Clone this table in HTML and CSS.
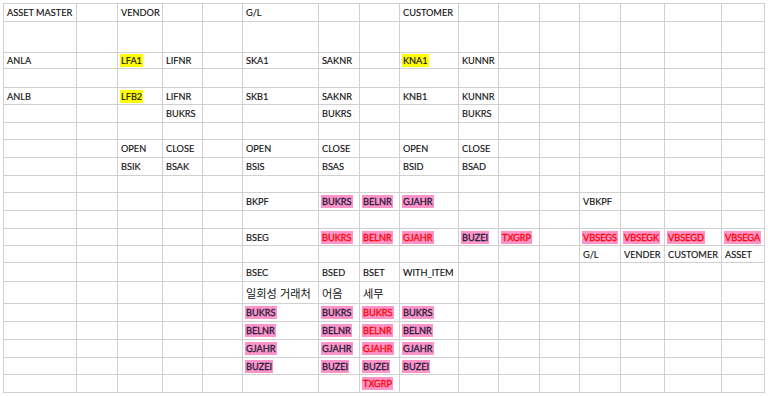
FILE: index.html
```html
<!DOCTYPE html>
<html lang="ko">
<head>
    <meta charset="utf-8">
    <title>SAP Tables</title>
    <link rel="stylesheet" href="styles.css">
</head>
<body>
    <div class="sheet">
        <div class="row h18"><div>ASSET MASTER</div><div></div><div>VENDOR</div><div></div><div></div><div>G/L</div><div></div><div></div><div>CUSTOMER</div><div></div><div></div><div></div><div></div><div></div><div></div><div></div></div>
        <div class="row h31"><div></div><div></div><div></div><div></div><div></div><div></div><div></div><div></div><div></div><div></div><div></div><div></div><div></div><div></div><div></div><div></div></div>
        <div class="row h16"><div>ANLA</div><div></div><div><span class="yl">LFA1</span></div><div>LIFNR</div><div></div><div>SKA1</div><div>SAKNR</div><div></div><div><span class="yl">KNA1</span></div><div>KUNNR</div><div></div><div></div><div></div><div></div><div></div><div></div></div>
        <div class="row h19"><div></div><div></div><div></div><div></div><div></div><div></div><div></div><div></div><div></div><div></div><div></div><div></div><div></div><div></div><div></div><div></div></div>
        <div class="row h17"><div>ANLB</div><div></div><div><span class="yl">LFB2</span></div><div>LIFNR</div><div></div><div>SKB1</div><div>SAKNR</div><div></div><div>KNB1</div><div>KUNNR</div><div></div><div></div><div></div><div></div><div></div><div></div></div>
        <div class="row h18"><div></div><div></div><div></div><div>BUKRS</div><div></div><div></div><div>BUKRS</div><div></div><div></div><div>BUKRS</div><div></div><div></div><div></div><div></div><div></div><div></div></div>
        <div class="row h17"><div></div><div></div><div></div><div></div><div></div><div></div><div></div><div></div><div></div><div></div><div></div><div></div><div></div><div></div><div></div><div></div></div>
        <div class="row h18"><div></div><div></div><div>OPEN</div><div>CLOSE</div><div></div><div>OPEN</div><div>CLOSE</div><div></div><div>OPEN</div><div>CLOSE</div><div></div><div></div><div></div><div></div><div></div><div></div></div>
        <div class="row h18"><div></div><div></div><div>BSIK</div><div>BSAK</div><div></div><div>BSIS</div><div>BSAS</div><div></div><div>BSID</div><div>BSAD</div><div></div><div></div><div></div><div></div><div></div><div></div></div>
        <div class="row h17"><div></div><div></div><div></div><div></div><div></div><div></div><div></div><div></div><div></div><div></div><div></div><div></div><div></div><div></div><div></div><div></div></div>
        <div class="row h18"><div></div><div></div><div></div><div></div><div></div><div>BKPF</div><div><span class="pk">BUKRS</span></div><div><span class="pk">BELNR</span></div><div><span class="pk">GJAHR</span></div><div></div><div></div><div></div><div>VBKPF</div><div></div><div></div><div></div></div>
        <div class="row h18"><div></div><div></div><div></div><div></div><div></div><div></div><div></div><div></div><div></div><div></div><div></div><div></div><div></div><div></div><div></div><div></div></div>
        <div class="row h17"><div></div><div></div><div></div><div></div><div></div><div>BSEG</div><div><span class="pk red">BUKRS</span></div><div><span class="pk red">BELNR</span></div><div><span class="pk red">GJAHR</span></div><div><span class="pk">BUZEI</span></div><div><span class="pk red">TXGRP</span></div><div></div><div><span class="pk red">VBSEGS</span></div><div><span class="pk red">VBSEGK</span></div><div><span class="pk red">VBSEGD</span></div><div><span class="pk red">VBSEGA</span></div></div>
        <div class="row h17"><div></div><div></div><div></div><div></div><div></div><div></div><div></div><div></div><div></div><div></div><div></div><div></div><div>G/L</div><div>VENDER</div><div>CUSTOMER</div><div>ASSET</div></div>
        <div class="row h19"><div></div><div></div><div></div><div></div><div></div><div>BSEC</div><div>BSED</div><div>BSET</div><div>WITH_ITEM</div><div></div><div></div><div></div><div></div><div></div><div></div><div></div></div>
        <div class="row h22 kr"><div></div><div></div><div></div><div></div><div></div><div>일회성 거래처</div><div>어음</div><div>세무</div><div></div><div></div><div></div><div></div><div></div><div></div><div></div><div></div></div>
        <div class="row h18"><div></div><div></div><div></div><div></div><div></div><div><span class="pk">BUKRS</span></div><div><span class="pk">BUKRS</span></div><div><span class="pk red">BUKRS</span></div><div><span class="pk">BUKRS</span></div><div></div><div></div><div></div><div></div><div></div><div></div><div></div></div>
        <div class="row h18"><div></div><div></div><div></div><div></div><div></div><div><span class="pk">BELNR</span></div><div><span class="pk">BELNR</span></div><div><span class="pk red">BELNR</span></div><div><span class="pk">BELNR</span></div><div></div><div></div><div></div><div></div><div></div><div></div><div></div></div>
        <div class="row h18"><div></div><div></div><div></div><div></div><div></div><div><span class="pk">GJAHR</span></div><div><span class="pk">GJAHR</span></div><div><span class="pk red">GJAHR</span></div><div><span class="pk">GJAHR</span></div><div></div><div></div><div></div><div></div><div></div><div></div><div></div></div>
        <div class="row h17"><div></div><div></div><div></div><div></div><div></div><div><span class="pk">BUZEI</span></div><div><span class="pk">BUZEI</span></div><div><span class="pk">BUZEI</span></div><div><span class="pk">BUZEI</span></div><div></div><div></div><div></div><div></div><div></div><div></div><div></div></div>
        <div class="row h18"><div></div><div></div><div></div><div></div><div></div><div></div><div></div><div><span class="pk red">TXGRP</span></div><div></div><div></div><div></div><div></div><div></div><div></div><div></div><div></div></div>
    </div>
</body>
</html>
```

FILE: styles.css
```css
body {
    margin: 0;
    background: #fff;
    font-family: Lato, "Liberation Sans", sans-serif;
    font-size: 9.2px;
    color: #111;
    -webkit-text-stroke: 0.15px;
}
.sheet {
    margin: 3px 0 0 3px;
    width: 761px;
    border-top: 1px solid #d0d0d0;
    border-left: 1px solid #d0d0d0;
}
.row {
    display: grid;
    grid-template-columns: 73px 41px 45px 40px 40px 76px 41px 40px 59px 40px 41px 40px 41px 44px 57px 43px;
}
.row > div {
    border-right: 1px solid #d0d0d0;
    border-bottom: 1px solid #d0d0d0;
    padding-left: 3px;
    display: flex;
    align-items: center;
    white-space: nowrap;
    min-width: 0;
}
.h16 { height: 16px; }
.h17 { height: 17px; }
.h18 { height: 18px; }
.h19 { height: 19px; }
.h22 { height: 22px; }
.h31 { height: 31px; }
.kr {
    font-family: "Noto Sans CJK KR", sans-serif;
    font-size: 11.2px;
    -webkit-text-stroke: 0;
}
.yl, .pk {
    display: inline-block;
    height: 13px;
    line-height: 13px;
    padding: 0 1px;
    margin-left: -1px;
}
.yl {
    background: #ffff00;
}
.pk {
    background: #ff94c8;
    color: #1c1c3c;
    -webkit-text-stroke: 0.3px;
}
.pk.red {
    color: #ff0000;
}
```
